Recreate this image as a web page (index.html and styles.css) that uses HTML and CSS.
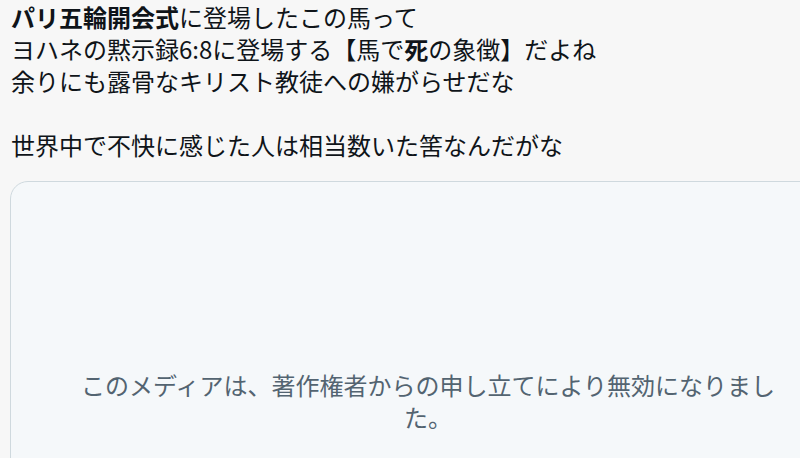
FILE: index.html
```html
<!DOCTYPE html>
<html lang="ja">
<head>
<meta charset="utf-8">
<link rel="stylesheet" href="styles.css">
</head>
<body>
<div class="tweet">
  <div class="tweet-text"><p class="line"><b>パリ五輪開会式</b>に登場したこの馬って</p><p class="line">ヨハネの黙示録6:8に登場する【馬で<b>死</b>の象徴】だよね</p><p class="line">余りにも露骨なキリスト教徒への嫌がらせだな</p><p class="line empty">&nbsp;</p><p class="line">世界中で不快に感じた人は相当数いた筈なんだがな</p></div>
  <div class="media-clip">
    <div class="media-card">
      <p class="media-msg">このメディアは、著作権者からの申し立てにより無効になりました。</p>
    </div>
  </div>
</div>
</body>
</html>
```

FILE: styles.css
```css
html, body {
  margin: 0;
  padding: 0;
  overflow: hidden;
  background: #f7f7f7;
}

body {
  width: 800px;
  height: 458px;
  font-family: "Noto Sans CJK JP", "Noto Sans", sans-serif;
  color: #0f1419;
}

.tweet {
  padding: 1px 0 0 10px;
  box-sizing: border-box;
  width: 800px;
  height: 458px;
  display: flex;
  flex-direction: column;
}

.tweet-text {
  font-size: 24px;
  line-height: 32px;
  padding-left: 1px;
}

.line {
  margin: 0;
  white-space: nowrap;
}

.line b {
  font-weight: 700;
}

.media-clip {
  margin-top: 20px;
  flex: 1;
  overflow: hidden;
  width: 790px;
}

.media-card {
  width: 836px;
  height: 420px;
  box-sizing: border-box;
  border: 1px solid #cfd9de;
  border-radius: 18px;
  background: #f5f8fa;
  padding: 187px 60px 0;
}

.media-msg {
  margin: 0;
  font-size: 24px;
  line-height: 32px;
  color: #536471;
  text-align: center;
}
```
